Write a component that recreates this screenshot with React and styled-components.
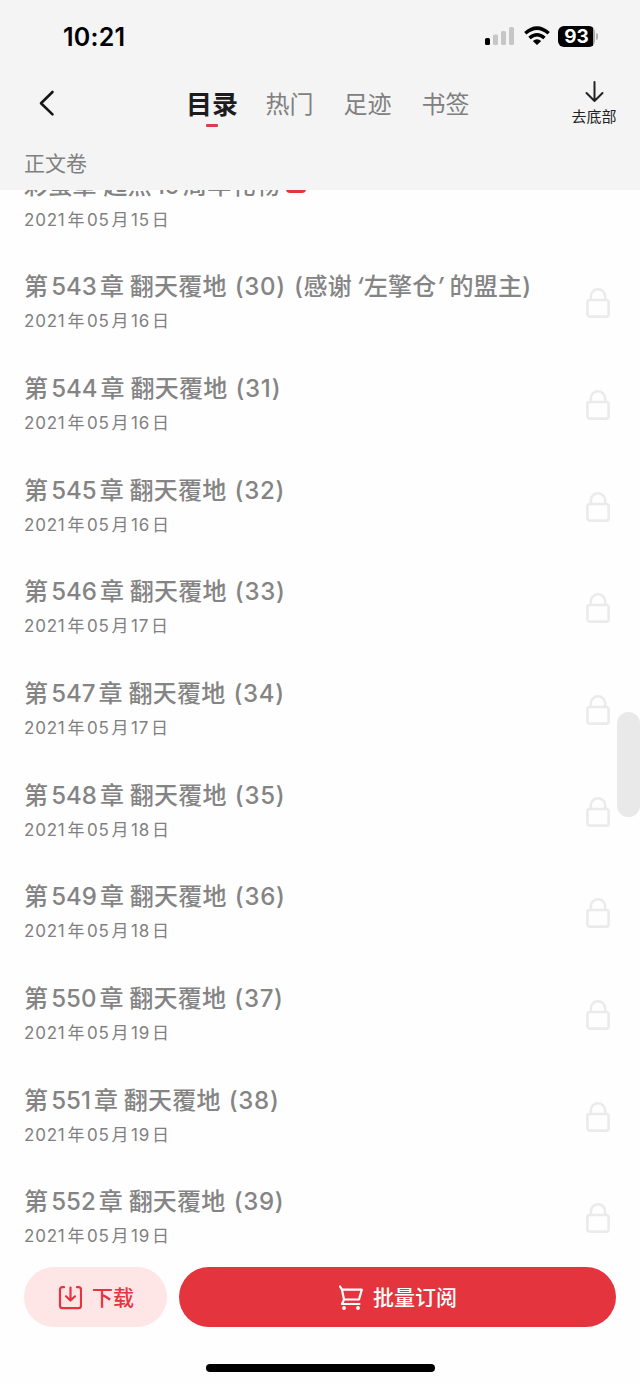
import React from "react";
import styled, { createGlobalStyle } from "styled-components";

const GlobalStyle = createGlobalStyle`
  * { box-sizing: border-box; }
  body {
    margin: 0;
    background: #fff;
    font-family: Inter, "Noto Sans CJK SC", sans-serif;
  }
`;

const Screen = styled.div`
  position: relative;
  display: flex;
  flex-direction: column;
  width: 640px;
  height: 1384px;
  overflow: hidden;
  background: #fefefe;
`;

const Header = styled.header`
  position: relative;
  z-index: 1;
  flex: none;
  height: 190px;
  background: #f4f4f4;
`;

const StatusBar = styled.div`
  display: flex;
  align-items: center;
  justify-content: space-between;
  height: 72px;
  padding: 0 42px 0 63px;
`;

const Clock = styled.span`
  padding-top: 1px;
  font-size: 25px;
  font-weight: 600;
  line-height: 30px;
  letter-spacing: 0.2px;
  color: #000;
`;

const StatusIcons = styled.div`
  display: flex;
  align-items: center;
`;

const NavBar = styled.nav`
  display: grid;
  grid-template-columns: 186px 1fr 72px;
  align-items: center;
  height: 64px;
`;

const BackButton = styled.button`
  display: flex;
  width: 60px;
  padding: 0 0 2px 36px;
  border: 0;
  background: none;
`;

const Tabs = styled.div`
  display: flex;
  align-items: center;
`;

const Tab = styled.span`
  position: relative;
  width: ${(p) => (p.$active ? 79.5 : 78)}px;
  font-size: ${(p) => (p.$active ? 26 : 24)}px;
  font-weight: ${(p) => (p.$active ? 700 : 400)};
  line-height: 37px;
  color: ${(p) => (p.$active ? "#1c1c1e" : "#808080")};
  white-space: nowrap;
`;

const TabMark = styled.i`
  position: absolute;
  left: 20px;
  top: 38px;
  width: 12px;
  height: 3px;
  border-radius: 1px;
  background: #dc3c4c;
`;

const BottomLink = styled.div`
  display: flex;
  flex-direction: column;
  align-items: center;
  gap: 4px;
  width: 52px;
  font-size: 15px;
  line-height: 20px;
  color: #222;
`;

const VolumeName = styled.div`
  padding: 13px 24px 0;
  font-size: 21px;
  line-height: 30px;
  color: #808080;
`;

const ChapterList = styled.main`
  flex: 1;
  min-height: 0;
  overflow: hidden;
`;

const Chapters = styled.ul`
  margin: -39px 0 0;
  padding: 0;
  list-style: none;
`;

const ChapterRow = styled.li`
  display: flex;
  align-items: center;
  justify-content: space-between;
  height: 101.67px;
  padding: 0 29px 0 24px;
`;

const ChapterText = styled.div`
  padding-top: 2px;
`;

const ChapterTitle = styled.div`
  display: flex;
  align-items: baseline;
  height: 34px;
  font-size: 24px;
  font-weight: 500;
  line-height: 34px;
  letter-spacing: 0.25px;
  color: #848484;
  white-space: pre;
`;

const ChapterNumber = styled.span`
  margin: 0 3px;
  font-weight: 450;
  letter-spacing: 0;
`;

const ChapterName = styled.span`
  margin-left: -1px;
`;

const PartNumber = styled.span`
  margin-left: 8px;
  font-weight: 450;
  letter-spacing: 0.7px;
`;

const Quote = styled.span`
  margin: ${(p) => (p.$close ? "0 5px 0 0" : "0 0 0 4px")};
  font-style: italic;
`;

const NewBadge = styled.i`
  align-self: center;
  width: 20px;
  height: 17px;
  margin: -2px 0 0 6px;
  border-radius: 4px;
  background: #e4343f;
`;

const ChapterDate = styled.div`
  display: flex;
  align-items: baseline;
  height: 34px;
  font-size: 17px;
  line-height: 34px;
  letter-spacing: 0.8px;
  color: #808080;
`;

const DateUnit = styled.span`
  margin: 0 2.6px 0 1.8px;
  letter-spacing: 0;
`;

const ScrollThumb = styled.div`
  position: absolute;
  left: 617px;
  top: 712px;
  width: 23px;
  height: 105px;
  border-radius: 12px;
  background: #e9e9e9;
`;

const Footer = styled.footer`
  flex: none;
  display: flex;
  flex-direction: column;
  align-items: center;
  height: 117px;
  background: #fefefe;
`;

const Actions = styled.div`
  display: flex;
  gap: 12px;
  width: 100%;
  height: 60px;
  padding: 0 24px;
`;

const ActionButton = styled.button`
  display: flex;
  align-items: center;
  justify-content: center;
  gap: 10px;
  flex: ${(p) => (p.$primary ? "1" : "0 0 143px")};
  padding: 1px 0 0 1px;
  border: 0;
  border-radius: 30px;
  background: ${(p) => (p.$primary ? "#e4343e" : "#fee6e7")};
  color: ${(p) => (p.$primary ? "#fff" : "#e4343e")};
  font: 500 21px/30px Inter, "Noto Sans CJK SC", sans-serif;
`;

const HomeIndicator = styled.div`
  width: 229px;
  height: 8px;
  margin-top: 37px;
  border-radius: 4px;
  background: #000;
`;

const Signal = styled.svg`
  margin-right: 9px;
`;

const SignalIcon = () => (
  <Signal width="30" height="20" viewBox="0 0 30 20">
    <rect x="0" y="12" width="5" height="7" rx="1.5" fill="#000" />
    <rect x="8" y="8.5" width="5" height="10.5" rx="1.5" fill="#c6c6c6" />
    <rect x="16" y="5" width="5" height="14" rx="1.5" fill="#c6c6c6" />
    <rect x="24" y="1" width="5" height="18" rx="1.5" fill="#c6c6c6" />
  </Signal>
);

const WifiIcon = () => (
  <svg width="26" height="20" viewBox="0 0 26 20" fill="none" stroke="#000" strokeWidth="3.5">
    <path d="M1.3 7.2Q13-3 24.7 7.2" />
    <path d="M5.5 12Q13 5.5 20.5 12" />
    <path d="M8.8 15Q13 11.7 17.2 15L13 19Z" fill="#000" stroke="none" />
  </svg>
);

const Battery = styled.div`
  display: flex;
  align-items: center;
  gap: 1px;
  margin-left: 8px;
`;

const BatteryBody = styled.span`
  width: 37px;
  height: 21px;
  border-radius: 6px;
  background: linear-gradient(90deg, #000 94%, #aaa 94%);
  color: #fff;
  font-size: 19px;
  font-weight: 700;
  line-height: 21px;
  text-align: center;
`;

const BatteryCap = styled.i`
  width: 2px;
  height: 7px;
  border-radius: 0 2px 2px 0;
  background: #b5b5b5;
`;

const BackIcon = () => (
  <svg width="22" height="28" viewBox="0 0 22 28" fill="none" stroke="#161616" strokeWidth="2.6" strokeLinecap="round" strokeLinejoin="round">
    <path d="M16.5 3L5 14.2L16.5 25.4" />
  </svg>
);

const DownIcon = () => (
  <svg width="20" height="22" viewBox="0 0 20 22" fill="none" stroke="#222" strokeWidth="2" strokeLinecap="round" strokeLinejoin="round">
    <path d="M10.5 1V20M2.500 12L10.5 20L18.5 12" />
  </svg>
);

const LockIcon = () => (
  <svg width="26" height="32" viewBox="0 0 26 32" fill="none" stroke="#ebebeb" strokeWidth="2.6">
    <rect x="2.4" y="13" width="21.2" height="16.6" rx="2.2" />
    <path d="M5.8 13V9.5A7.2 7.2 0 0 1 20.2 9.5V13" />
  </svg>
);

const DownloadIcon = () => (
  <svg width="24" height="24" viewBox="0 0 24 24" fill="none" stroke="currentColor" strokeWidth="2.2" strokeLinecap="round" strokeLinejoin="round">
    <path d="M6 1.2H4.5Q2 1.2 2 3.7V19.7Q2 22.2 4.5 22.2H20.5Q23 22.2 23 19.7V3.7Q23 1.2 20.5 1.2H19" />
    <path d="M12.5 1.5V14M8 10.3L12.5 14.5L17 10.3" />
  </svg>
);

const CartIcon = () => (
  <svg width="24" height="26" viewBox="0 0 24 26" fill="none" stroke="currentColor" strokeWidth="2.2" strokeLinecap="round" strokeLinejoin="round">
    <path d="M1 1.5L3 4.7L5 14.5H20L22.8 4.7H3M5 14.5L3 19H20.5" />
    <circle cx="5" cy="23" r="1.9" fill="currentColor" stroke="none" />
    <circle cx="19" cy="23" r="1.9" fill="currentColor" stroke="none" />
  </svg>
);

const chapters = [
  { number: 543, part: 30, day: "16", patron: "左擎仓" },
  { number: 544, part: 31, day: "16" },
  { number: 545, part: 32, day: "16" },
  { number: 546, part: 33, day: "17" },
  { number: 547, part: 34, day: "17" },
  { number: 548, part: 35, day: "18" },
  { number: 549, part: 36, day: "18" },
  { number: 550, part: 37, day: "19" },
  { number: 551, part: 38, day: "19" },
  { number: 552, part: 39, day: "19" },
];

const PublishedOn = ({ day }) => (
  <ChapterDate>
    2021<DateUnit>年</DateUnit>05<DateUnit>月</DateUnit>
    {day}
    <DateUnit>日</DateUnit>
  </ChapterDate>
);

const Chapter = ({ number, part, day, patron }) => (
  <ChapterRow>
    <ChapterText>
      <ChapterTitle>
        第<ChapterNumber>{number}</ChapterNumber>章 <ChapterName>翻天覆地</ChapterName>
        <PartNumber>({part})</PartNumber>
        {patron && (
          <>
            <PartNumber>(</PartNumber>感谢
            <Quote>‘</Quote>
            {patron}
            <Quote $close>’</Quote>的盟主)
          </>
        )}
      </ChapterTitle>
      <PublishedOn day={day} />
    </ChapterText>
    <LockIcon />
  </ChapterRow>
);

export default function App() {
  return (
    <Screen>
      <GlobalStyle />
      <Header>
        <StatusBar>
          <Clock>10:21</Clock>
          <StatusIcons>
            <SignalIcon />
            <WifiIcon />
            <Battery>
              <BatteryBody>93</BatteryBody>
              <BatteryCap />
            </Battery>
          </StatusIcons>
        </StatusBar>
        <NavBar>
          <BackButton aria-label="返回">
            <BackIcon />
          </BackButton>
          <Tabs>
            <Tab $active>
              目录
              <TabMark />
            </Tab>
            <Tab>热门</Tab>
            <Tab>足迹</Tab>
            <Tab>书签</Tab>
          </Tabs>
          <BottomLink>
            <DownIcon />
            去底部
          </BottomLink>
        </NavBar>
        <VolumeName>正文卷</VolumeName>
      </Header>
      <ChapterList>
        <Chapters>
          <ChapterRow>
            <ChapterText>
              <ChapterTitle>
                彩蛋章 起点<ChapterNumber>19</ChapterNumber>周年礼物
                <NewBadge />
              </ChapterTitle>
              <PublishedOn day="15" />
            </ChapterText>
          </ChapterRow>
          {chapters.map((chapter) => (
            <Chapter key={chapter.number} {...chapter} />
          ))}
        </Chapters>
      </ChapterList>
      <Footer>
        <Actions>
          <ActionButton>
            <DownloadIcon />
            下载
          </ActionButton>
          <ActionButton $primary>
            <CartIcon />
            批量订阅
          </ActionButton>
        </Actions>
        <HomeIndicator />
      </Footer>
      <ScrollThumb />
    </Screen>
  );
}
